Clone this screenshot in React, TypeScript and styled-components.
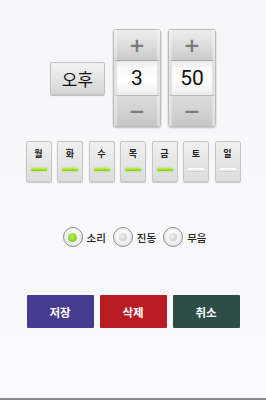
import React, { useState } from 'react';
import styled, { createGlobalStyle } from 'styled-components';

const GlobalStyle = createGlobalStyle`
  html, body {
    margin: 0;
    padding: 0;
    background: #f8f8fa;
  }
  body {
    font-family: "Noto Sans CJK KR", "Noto Sans", sans-serif;
  }
`;

const Screen = styled.div`
  width: 266px;
  height: 400px;
  box-sizing: border-box;
  background: linear-gradient(#f6f6f8, #fbfbfd);
  border-bottom: 2px solid #8a8a8a;
  display: flex;
  flex-direction: column;
  align-items: center;
  padding-top: 29px;
`;

const TimeRow = styled.div`
  display: flex;
  align-items: center;
  gap: 7px;
`;

const AmPmButton = styled.button`
  width: 55px;
  height: 33px;
  margin-right: 1px;
  border: 1px solid #c4c4c4;
  border-radius: 2px;
  background: linear-gradient(#f2f2f2, #d6d6d6);
  box-shadow: 0 1px 1px rgba(0, 0, 0, 0.25);
  font-family: "Noto Sans CJK KR", sans-serif;
  font-size: 17px;
  color: #111;
  padding: 0;
`;

const Spinner = styled.div`
  width: 48px;
  height: 98px;
  display: flex;
  flex-direction: column;
  border: 1px solid #bcbcbc;
  border-radius: 3px;
  box-sizing: border-box;
  overflow: hidden;
  box-shadow: 0 1px 2px rgba(0, 0, 0, 0.25);
`;

const SpinButton = styled.div<{ $top?: boolean }>`
  height: 30px;
  display: flex;
  align-items: center;
  justify-content: center;
  background: ${p => p.$top
    ? 'linear-gradient(#eeeeee, #d9d9d9 60%, #c9c9c9)'
    : 'linear-gradient(#dcdcdc, #d2d2d2 50%, #c6c6c6)'};
  border-left: 3px solid rgba(255, 255, 255, 0.35);
  border-right: 3px solid rgba(255, 255, 255, 0.35);
  color: #7c7c7c;
  font-family: "DejaVu Sans", sans-serif;
  font-size: 20px;
  font-weight: 700;
  line-height: 1;
`;

const SpinValue = styled.div`
  flex: 1;
  display: flex;
  align-items: center;
  justify-content: center;
  background: linear-gradient(#e8e8e8, #fafafa 20%, #ffffff 60%, #ececec);
  border-top: 1px solid #a8a8a8;
  border-bottom: 1px solid #b8b8b8;
  border-left: 3px solid #e2e2e2;
  border-right: 3px solid #e2e2e2;
  font-family: Roboto, "Noto Sans", sans-serif;
  font-size: 21px;
  color: #111;
`;

const DayRow = styled.div`
  display: flex;
  gap: 5.5px;
  margin-top: 14px;
`;

const DayButton = styled.button<{ $on: boolean }>`
  width: 26px;
  height: 41px;
  box-sizing: border-box;
  padding: 6px 4px 0;
  border: 1px solid #c6c6c6;
  border-radius: 2px;
  background: linear-gradient(#f0f0f0, #dcdcdc);
  box-shadow: 0 1px 1px rgba(0, 0, 0, 0.2);
  display: flex;
  flex-direction: column;
  align-items: stretch;
  gap: 8px;
  font-family: "Noto Sans CJK KR", sans-serif;
  font-size: 9px;
  font-weight: 700;
  color: #222;
  line-height: 12px;

  &::after {
    content: '';
    height: 3px;
    border-radius: 1px;
    background: ${p => p.$on
      ? 'linear-gradient(#c6f25a, #7fcc0a)'
      : 'linear-gradient(#ffffff, #e6e6e6)'};
    box-shadow: ${p => p.$on ? '0 0 2px #9be030' : '0 1px 0 #cfcfcf'};
  }
`;

const RadioRow = styled.div`
  display: flex;
  align-items: center;
  margin-top: 45px;
  margin-left: 10px;
`;

const RadioLabel = styled.label`
  display: flex;
  align-items: center;
  gap: 4px;
  margin-right: 7px;
  font-family: "Noto Sans CJK KR", sans-serif;
  font-size: 10.5px;
  font-weight: 500;
  color: #222;
`;

const RadioCircle = styled.span<{ $checked: boolean }>`
  width: 20px;
  height: 20px;
  box-sizing: border-box;
  border-radius: 50%;
  border: 1px solid #8c8c8c;
  background: radial-gradient(circle at 50% 35%, #ffffff, #e4e4e4);
  display: flex;
  align-items: center;
  justify-content: center;

  &::after {
    content: '';
    width: ${p => p.$checked ? 9 : 8}px;
    height: ${p => p.$checked ? 9 : 8}px;
    border-radius: 50%;
    background: ${p => p.$checked
      ? 'radial-gradient(circle at 45% 40%, #b6ee5a, #6cc210)'
      : 'radial-gradient(circle at 40% 40%, #f4f4f4, #bdbdbd)'};
  }
`;

const ActionRow = styled.div`
  display: flex;
  gap: 6px;
  margin-top: 48px;
`;

const ActionButton = styled.button<{ $color: string }>`
  width: 67px;
  height: 33px;
  border: none;
  border-radius: 1px;
  background: ${p => p.$color};
  color: #fff;
  font-family: "Noto Sans CJK KR", sans-serif;
  font-size: 11.5px;
  font-weight: 700;
  padding: 0;
`;

const days = ['월', '화', '수', '목', '금', '토', '일'];
const activeDays = [true, true, true, true, true, false, false];
const modes = ['소리', '진동', '무음'];

export default function App() {
  const [mode, setMode] = useState(0);
  return (
    <>
      <GlobalStyle />
      <Screen>
        <TimeRow>
          <AmPmButton>오후</AmPmButton>
          <Spinner>
            <SpinButton $top>+</SpinButton>
            <SpinValue>3</SpinValue>
            <SpinButton>−</SpinButton>
          </Spinner>
          <Spinner>
            <SpinButton $top>+</SpinButton>
            <SpinValue>50</SpinValue>
            <SpinButton>−</SpinButton>
          </Spinner>
        </TimeRow>
        <DayRow>
          {days.map((d, i) => (
            <DayButton key={d} $on={activeDays[i]}>{d}</DayButton>
          ))}
        </DayRow>
        <RadioRow>
          {modes.map((m, i) => (
            <RadioLabel key={m} onClick={() => setMode(i)}>
              <RadioCircle $checked={mode === i} />
              {m}
            </RadioLabel>
          ))}
        </RadioRow>
        <ActionRow>
          <ActionButton $color="#473b8f">저장</ActionButton>
          <ActionButton $color="#b81c22">삭제</ActionButton>
          <ActionButton $color="#2d4d49">취소</ActionButton>
        </ActionRow>
      </Screen>
    </>
  );
}
